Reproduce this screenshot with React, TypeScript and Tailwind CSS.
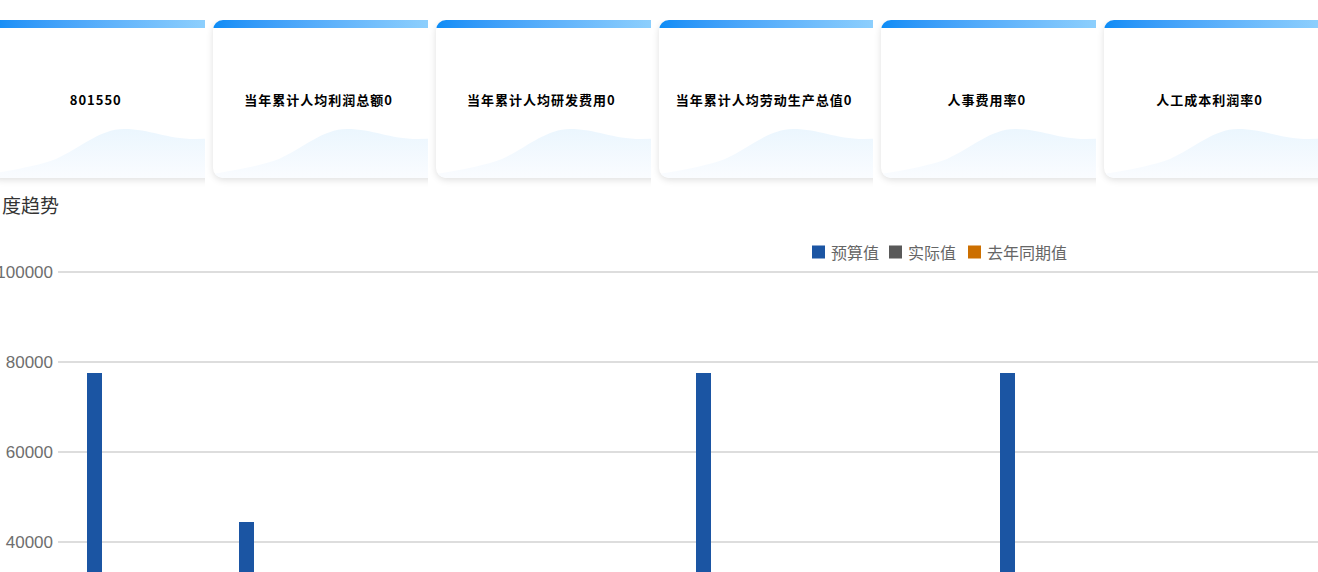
import React from "react";

const cards = [
  "801550",
  "当年累计人均利润总额0",
  "当年累计人均研发费用0",
  "当年累计人均劳动生产总值0",
  "人事费用率0",
  "人工成本利润率0",
];

function Wave({ id }: { id: string }) {
  return (
    <svg
      className="absolute bottom-0 left-0"
      width="240"
      height="60"
      viewBox="0 0 240 60"
      preserveAspectRatio="none"
    >
      <defs>
        <linearGradient id={id} x1="0" y1="0" x2="0" y2="1">
          <stop offset="0" stopColor="#ebf6fe" />
          <stop offset="1" stopColor="#fafcff" />
        </linearGradient>
      </defs>
      <path
        d="M0,56 C30,51 50,47 66,41 C90,30 110,11 134,11 C160,11 176,21 205,21 L240,20 L240,60 L0,60 Z"
        fill={`url(#${id})`}
      />
    </svg>
  );
}

function Card({ text, idx }: { text: string; idx: number }) {
  return (
    <div className="w-[222.75px] shrink-0 overflow-hidden pl-2 pb-[10px]">
      <div className="relative h-[158px] w-[240px] overflow-hidden rounded-[10px] bg-white shadow-[0_2px_7px_rgba(0,0,0,0.13)]">
        <div className="h-[8px] w-[222px] bg-gradient-to-r from-[#0a8cf6] to-[#90d1fd]" />
        <Wave id={`wave-${idx}`} />
        <div className="relative flex h-[144px] w-[211px] items-center justify-center">
          <span
            className="text-[13px] font-bold tracking-[1px] text-black"
            style={{ fontFamily: '"Noto Sans CJK SC", sans-serif' }}
          >
            {text}
          </span>
        </div>
      </div>
    </div>
  );
}

const grid = [
  { y: 55, label: "100000" },
  { y: 145, label: "80000" },
  { y: 235, label: "60000" },
  { y: 325, label: "40000" },
];

const bars = [
  { x: 87, y: 155 },
  { x: 239, y: 304 },
  { x: 696, y: 155 },
  { x: 1000, y: 155 },
];

const legend = [
  { sx: 812, tx: 831, color: "#1b55a3", label: "预算值" },
  { sx: 889, tx: 908, color: "#595959", label: "实际值" },
  { sx: 968, tx: 987, color: "#cc6f00", label: "去年同期值" },
];

export default function App() {
  return (
    <div className="h-[572px] w-[1318px] overflow-hidden bg-white">
      <div className="pt-[20px]">
        <div className="ml-[-17.75px] flex">
          {cards.map((c, i) => (
            <Card key={i} text={c} idx={i} />
          ))}
        </div>
      </div>
      <div
        className="mt-[5px] h-[24px] pl-[2px] text-[19px] leading-[24px] text-[#333]"
        style={{ fontFamily: '"Noto Sans CJK SC", sans-serif' }}
      >
        度趋势
      </div>
      <svg width="1318" height="355" className="block">
        {grid.map((g) => (
          <g key={g.label}>
            <line x1="58" x2="1318" y1={g.y} y2={g.y} stroke="#d2d2d2" strokeWidth="1.3" />
            <text
              x="53"
              y={g.y}
              textAnchor="end"
              dominantBaseline="central"
              fontSize="17"
              fill="#6e6e6e"
              fontFamily='"Liberation Sans", Arial, sans-serif'
            >
              {g.label}
            </text>
          </g>
        ))}
        {bars.map((b, i) => (
          <rect key={i} x={b.x} y={b.y + 1} width="15" height={400} fill="#1b55a3" />
        ))}
        {legend.map((l) => (
          <g key={l.label}>
            <rect x={l.sx} y="28.5" width="13" height="13" fill={l.color} />
            <text
              x={l.tx}
              y="34.5"
              dominantBaseline="central"
              fontSize="16"
              fill="#666"
              fontFamily='"Noto Sans CJK SC", sans-serif'
            >
              {l.label}
            </text>
          </g>
        ))}
      </svg>
    </div>
  );
}
